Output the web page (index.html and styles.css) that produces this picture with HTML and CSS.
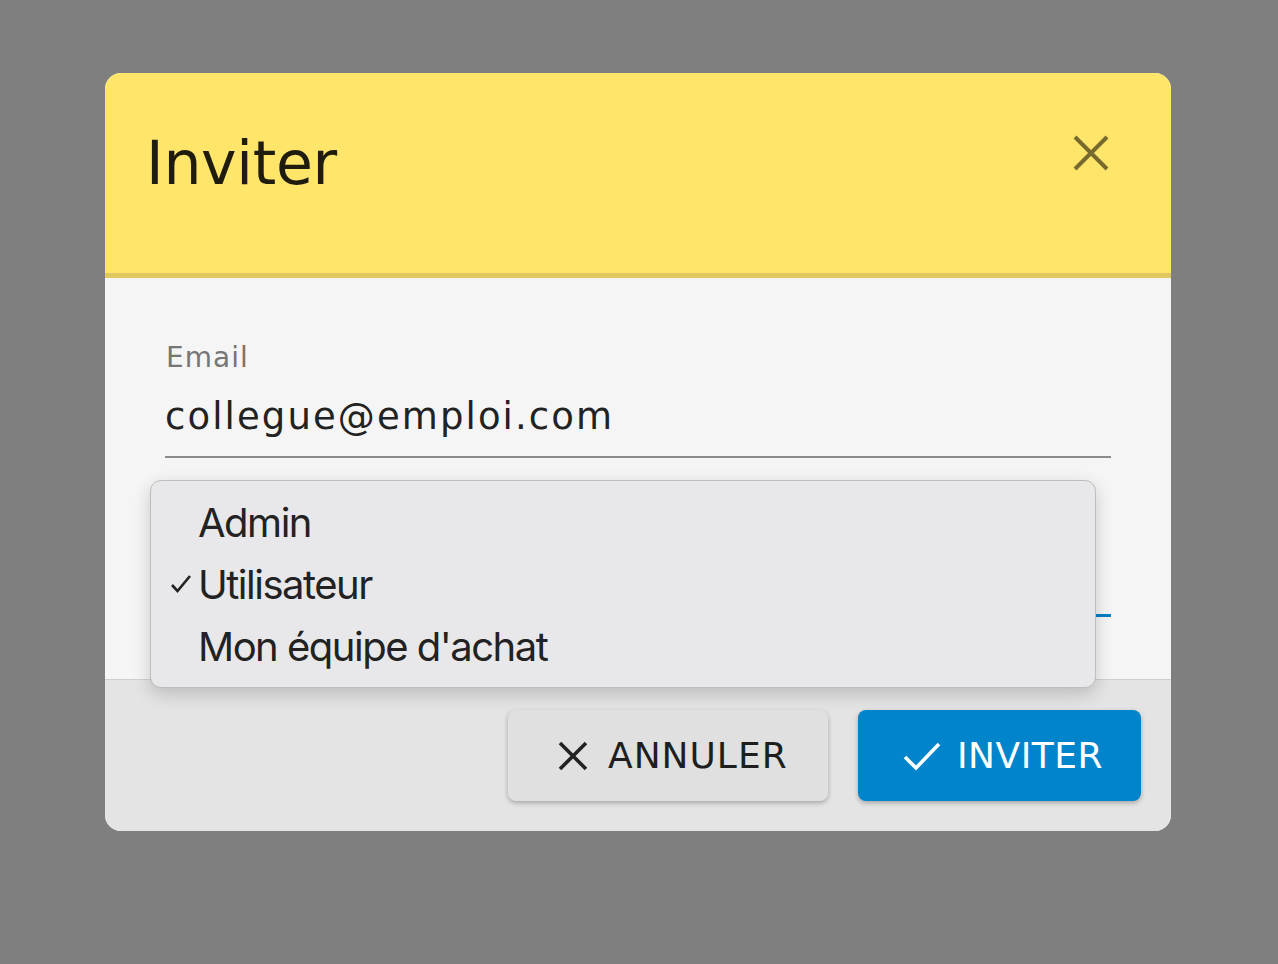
FILE: index.html
```html
<!DOCTYPE html>
<html lang="fr">
<head>
<meta charset="utf-8">
<title>Inviter</title>
<link rel="stylesheet" href="styles.css">
</head>
<body>
<div class="overlay">
  <div class="dialog">
    <div class="header">
      <h1 class="title">Inviter</h1>
      <button class="close" aria-label="Fermer">
        <svg width="36" height="36" viewBox="0 0 36 36"><path d="M2 2L34 34M34 2L2 34" stroke="#786a2c" stroke-width="4" fill="none"/></svg>
      </button>
    </div>
    <div class="body">
      <div class="field">
        <div class="label">Email</div>
        <div class="value">collegue@emploi.com</div>
      </div>
      <div class="field select-field"></div>
    </div>
    <div class="footer">
      <button class="btn btn-cancel">
        <svg width="30" height="30" viewBox="0 0 30 30"><path d="M2 2L28 28M28 2L2 28" stroke="#222" stroke-width="3.6" fill="none"/></svg>
        <span>ANNULER</span>
      </button>
      <button class="btn btn-invite">
        <svg width="38" height="30" viewBox="0 0 38 30"><path d="M2 16L13 27L36 3" stroke="#fff" stroke-width="3.6" fill="none"/></svg>
        <span>INVITER</span>
      </button>
    </div>
    <div class="menu">
      <div class="item"><span class="check"></span>Admin</div>
      <div class="item"><span class="check"><svg width="22" height="20" viewBox="0 0 22 20"><path d="M2 11L7.5 17L20 2" stroke="#222" stroke-width="2.6" fill="none"/></svg></span>Utilisateur</div>
      <div class="item"><span class="check"></span>Mon équipe d'achat</div>
    </div>
  </div>
</div>
</body>
</html>
```

FILE: styles.css
```css
html, body {
  margin: 0;
  padding: 0;
}
body {
  background: #7f7f7f;
  width: 1278px;
  height: 964px;
  overflow: hidden;
  font-family: "DejaVu Sans", sans-serif;
}
.overlay {
  padding: 73px 0 0 105px;
}
.dialog {
  position: relative;
  width: 1066px;
  height: 758px;
  border-radius: 16px;
  overflow: hidden;
  display: flex;
  flex-direction: column;
  background: #f5f5f5;
}
.header {
  height: 200px;
  background: #ffe66b;
  border-bottom: 5px solid #e0c85c;
  display: flex;
  justify-content: space-between;
  align-items: flex-start;
  padding: 0 62px 0 41px;
}
.title {
  margin: 0;
  padding-top: 55px;
  font-weight: normal;
  font-size: 60px;
  line-height: 70px;
  color: #1f1c0e;
  letter-spacing: -0.3px;
}
.close {
  margin-top: 62px;
  padding: 0;
  border: 0;
  background: transparent;
  width: 36px;
  height: 36px;
  display: flex;
}
.body {
  flex: 1;
  padding: 61px 60px 0 60px;
}
.field {
  border-bottom: 2px solid #8a8a8a;
  height: 119px;
  box-sizing: border-box;
}
.label {
  font-size: 28px;
  line-height: 38px;
  color: #767676;
  letter-spacing: 1px;
  padding-left: 1px;
}
.value {
  font-size: 37px;
  line-height: 50px;
  color: #222;
  letter-spacing: 2.1px;
  padding-top: 15px;
}
.select-field {
  margin-top: 39px;
  border-bottom: 3px solid #0a7fc4;
  height: 120px;
}
.footer {
  height: 152px;
  box-sizing: border-box;
  border-top: 1px solid #cfcfcf;
  background: #e4e4e4;
  display: flex;
  justify-content: flex-end;
  align-items: flex-start;
  gap: 30px;
  padding: 30px 30px 0 0;
}
.btn {
  height: 91px;
  border: 0;
  border-radius: 8px;
  display: flex;
  align-items: center;
  font-family: "DejaVu Sans", sans-serif;
  font-size: 36px;
  letter-spacing: 1px;
  box-shadow: 0 2px 5px rgba(0, 0, 0, 0.28);
  box-sizing: border-box;
}
.btn-cancel {
  width: 320px;
  background: #e0e0e0;
  color: #1e1e1e;
  padding: 0 0 0 50px;
  gap: 20px;
}
.btn-invite {
  width: 283px;
  background: #0085cc;
  color: #fff;
  padding: 0 0 0 45px;
  gap: 16px;
  letter-spacing: 0.5px;
}
.btn svg {
  flex: none;
}
.menu {
  position: absolute;
  left: 45px;
  top: 407px;
  width: 946px;
  box-sizing: border-box;
  padding: 10px 0;
  background: #e8e8ea;
  border: 1px solid #bdbdbd;
  border-radius: 11px;
  box-shadow: 0 6px 18px rgba(0, 0, 0, 0.18);
  font-family: Inter, "Noto Sans", sans-serif;
  font-size: 40px;
  color: #222;
}
.item {
  height: 62px;
  display: flex;
  align-items: center;
  letter-spacing: -1.5px;
}
.check {
  width: 47px;
  padding-left: 19px;
  box-sizing: border-box;
  display: flex;
  align-items: center;
}
```
